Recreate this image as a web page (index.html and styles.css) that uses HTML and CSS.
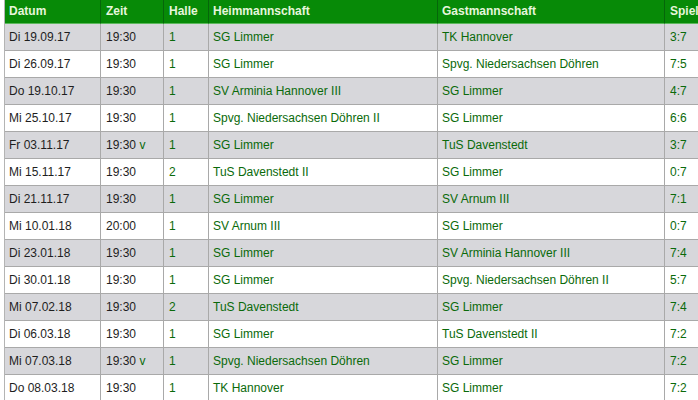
FILE: index.html
```html
<!DOCTYPE html>
<html>
<head>
<meta charset="utf-8">
<link rel="stylesheet" href="styles.css">
</head>
<body>
<table class="games">
<colgroup>
<col class="c-date"><col class="c-time"><col class="c-hall"><col class="c-home"><col class="c-guest"><col class="c-res">
</colgroup>
<thead>
<tr><th>Datum</th><th>Zeit</th><th>Halle</th><th>Heimmannschaft</th><th>Gastmannschaft</th><th>Spiele</th></tr>
</thead>
<tbody>
<tr><td>Di 19.09.17</td><td>19:30</td><td class="g">1</td><td class="g">SG Limmer</td><td class="g">TK Hannover</td><td class="g">3:7</td></tr>
<tr><td>Di 26.09.17</td><td>19:30</td><td class="g">1</td><td class="g">SG Limmer</td><td class="g">Spvg. Niedersachsen Döhren</td><td class="g">7:5</td></tr>
<tr><td>Do 19.10.17</td><td>19:30</td><td class="g">1</td><td class="g">SV Arminia Hannover III</td><td class="g">SG Limmer</td><td class="g">4:7</td></tr>
<tr><td>Mi 25.10.17</td><td>19:30</td><td class="g">1</td><td class="g">Spvg. Niedersachsen Döhren II</td><td class="g">SG Limmer</td><td class="g">6:6</td></tr>
<tr><td>Fr 03.11.17</td><td>19:30 <span class="g">v</span></td><td class="g">1</td><td class="g">SG Limmer</td><td class="g">TuS Davenstedt</td><td class="g">3:7</td></tr>
<tr><td>Mi 15.11.17</td><td>19:30</td><td class="g">2</td><td class="g">TuS Davenstedt II</td><td class="g">SG Limmer</td><td class="g">0:7</td></tr>
<tr><td>Di 21.11.17</td><td>19:30</td><td class="g">1</td><td class="g">SG Limmer</td><td class="g">SV Arnum III</td><td class="g">7:1</td></tr>
<tr><td>Mi 10.01.18</td><td>20:00</td><td class="g">1</td><td class="g">SV Arnum III</td><td class="g">SG Limmer</td><td class="g">0:7</td></tr>
<tr><td>Di 23.01.18</td><td>19:30</td><td class="g">1</td><td class="g">SG Limmer</td><td class="g">SV Arminia Hannover III</td><td class="g">7:4</td></tr>
<tr><td>Di 30.01.18</td><td>19:30</td><td class="g">1</td><td class="g">SG Limmer</td><td class="g">Spvg. Niedersachsen Döhren II</td><td class="g">5:7</td></tr>
<tr><td>Mi 07.02.18</td><td>19:30</td><td class="g">2</td><td class="g">TuS Davenstedt</td><td class="g">SG Limmer</td><td class="g">7:4</td></tr>
<tr><td>Di 06.03.18</td><td>19:30</td><td class="g">1</td><td class="g">SG Limmer</td><td class="g">TuS Davenstedt II</td><td class="g">7:2</td></tr>
<tr><td>Mi 07.03.18</td><td>19:30 <span class="g">v</span></td><td class="g">1</td><td class="g">Spvg. Niedersachsen Döhren</td><td class="g">SG Limmer</td><td class="g">7:2</td></tr>
<tr><td>Do 08.03.18</td><td>19:30</td><td class="g">1</td><td class="g">TK Hannover</td><td class="g">SG Limmer</td><td class="g">7:2</td></tr>
</tbody>
</table>
</body>
</html>
```
FILE: styles.css
```css
html, body {
  margin: 0;
  padding: 0;
  background: #ffffff;
  overflow: hidden;
}
.games {
  margin-left: 4px;
  border-collapse: separate;
  border-spacing: 0;
  table-layout: fixed;
  width: 721px;
  border-left: 1px solid #b4b4b4;
  font-family: "Liberation Sans", Arial, sans-serif;
  font-size: 12px;
}
.c-date { width: 96px; }
.c-time { width: 63px; }
.c-hall { width: 45px; }
.c-home { width: 229px; }
.c-guest { width: 227px; }
.c-res { width: 61px; }
.games th, .games td {
  box-sizing: border-box;
  text-align: left;
  white-space: nowrap;
  overflow: hidden;
  padding: 0 0 0 4px;
}
.games th {
  height: 24px;
  background: #078a07;
  color: #e6f6dc;
  font-weight: bold;
  border-right: 1px solid #05660a;
  border-bottom: 1px solid #5cb85c;
  vertical-align: middle;
  padding-bottom: 2px;
}
.games td {
  height: 27px;
  color: #1e1e1e;
  border-right: 1px solid #a9a9a9;
  border-bottom: 1px solid #a9a9a9;
  vertical-align: middle;
}
.games td:nth-child(2), .games td:nth-child(3), .games td:nth-child(6),
.games th:nth-child(2), .games th:nth-child(3), .games th:nth-child(6) {
  padding-left: 5px;
}
.games tbody tr:nth-child(odd) td {
  background: #d7d7db;
}
.games .g {
  color: #0a6a0a;
}
```
